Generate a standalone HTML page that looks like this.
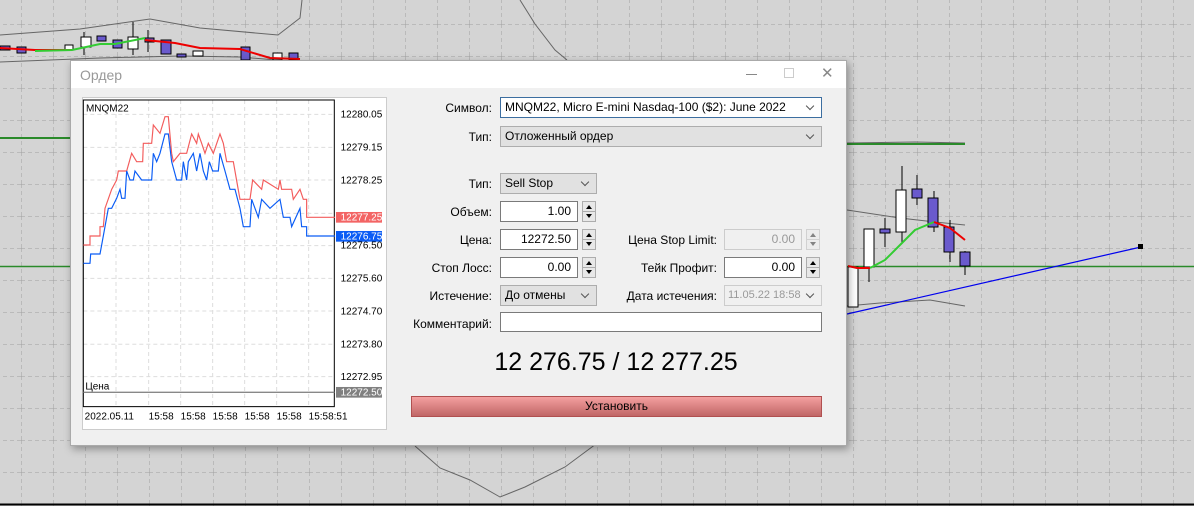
<!DOCTYPE html>
<html><head><meta charset="utf-8"><style>
*{margin:0;padding:0;box-sizing:border-box}
body{width:1194px;height:506px;overflow:hidden;background:#d4d4d4;font-family:"Liberation Sans",Arial,sans-serif;font-size:12px;color:#000;position:relative}
.abs{position:absolute}
#dlg{left:70px;top:60px;width:777px;height:386px;background:#f0f0f0;border:1px solid #aaa;box-shadow:2px 3px 8px rgba(0,0,0,.35)}
#title{left:0;top:0;width:775px;height:27px;background:#fff}
.lbl{position:absolute;text-align:right;width:200px;font-size:12px;line-height:20px}
.inp{position:absolute;background:#fff;border:1px solid #7a7a7a;height:21px;line-height:19px;text-align:right;padding-right:6px;font-size:12px}
.dd{position:absolute;background:#e1e1e1;border:1px solid #adadad;height:21px;line-height:19px;padding-left:4px;font-size:12px}
.dd:after{content:"";position:absolute;right:8px;top:5px;width:5px;height:5px;border-right:1px solid #555;border-bottom:1px solid #555;transform:rotate(45deg)}
.sp{position:absolute;width:14px;height:21px;border:1px solid #adadad;background:#e8e8e8}
.sp:before{content:"";position:absolute;left:3px;top:3px;border-left:3px solid transparent;border-right:3px solid transparent;border-bottom:4px solid #000}
.sp:after{content:"";position:absolute;left:3px;top:12px;border-left:3px solid transparent;border-right:3px solid transparent;border-top:4px solid #000}
.sp i{position:absolute;left:0;top:9px;width:12px;border-top:1px solid #adadad}
.dis{opacity:.45}
</style></head><body>
<svg class="abs" style="left:0;top:0" width="1194" height="506">
<defs><pattern id="g" x="21" y="24" width="32" height="32" patternUnits="userSpaceOnUse"><path d="M0 0V32M0 0H32" stroke="#a0a0a0" stroke-dasharray="4,3" fill="none"/></pattern></defs>
<rect width="1194" height="506" fill="url(#g)"/>
<line x1="0" y1="504.5" x2="1194" y2="504.5" stroke="#000" stroke-width="2"/>
<g fill="none" stroke="#666">
<path d="M0 35 L80 29 L150 19 L200 28 L278 35 L300 18 L302 0"/>
<path d="M0 62 L100 58 L180 56 L240 57 L300 62"/>
<path d="M520 0 L535 24 L555 50 L567 60"/>
<path d="M415 446 L440 468 L470 480 L500 497 L525 487 L565 467 L600 441"/>
<path d="M847 210 L900 218 L935 222 L965 225"/>
<path d="M847 306 L880 303 L930 300 L965 306"/>
<path d="M847 143 L915 142 L965 143"/>
</g>
<line x1="0" y1="138" x2="70" y2="138" stroke="#2a8a2a" stroke-width="2"/>
<line x1="847" y1="144" x2="965" y2="144" stroke="#2a8a2a" stroke-width="2"/>
<line x1="0" y1="266.5" x2="1194" y2="266.5" stroke="#2a8a2a" stroke-width="1.5"/>
<path d="M847 314 L1141 247" stroke="#0000ee" stroke-width="1.2"/>
<rect x="1138" y="244" width="5" height="5" fill="#000"/>
<g stroke="#000" stroke-width="1">
<line x1="84" y1="32" x2="84" y2="55"/><line x1="133" y1="22" x2="133" y2="55"/><line x1="148" y1="30" x2="148" y2="52"/>
<rect x="0" y="46" width="10" height="4" fill="#6a5acd"/><rect x="17" y="47" width="9" height="6" fill="#6a5acd"/>
<rect x="65" y="45" width="8" height="5" fill="#fff"/><rect x="81" y="37" width="10" height="10" fill="#fff"/>
<rect x="97" y="36" width="9" height="5" fill="#6a5acd"/><rect x="113" y="40" width="9" height="8" fill="#6a5acd"/>
<rect x="128" y="37" width="10" height="12" fill="#fff"/><rect x="145" y="38" width="9" height="4" fill="#6a5acd"/>
<rect x="161" y="40" width="10" height="14" fill="#6a5acd"/><rect x="177" y="54" width="9" height="3" fill="#6a5acd"/>
<rect x="193" y="51" width="10" height="5" fill="#fff"/><rect x="241" y="47" width="9" height="13" fill="#6a5acd"/>
<rect x="273" y="53" width="9" height="7" fill="#fff"/><rect x="289" y="53" width="9" height="7" fill="#6a5acd"/>
<line x1="902" y1="166" x2="902" y2="243"/><line x1="917" y1="175" x2="917" y2="205"/><line x1="934" y1="191" x2="934" y2="232"/><line x1="950" y1="220" x2="950" y2="262"/><line x1="965" y1="251" x2="965" y2="275"/><line x1="869" y1="229" x2="869" y2="282"/><line x1="885" y1="218" x2="885" y2="247"/>
<rect x="848" y="267" width="10" height="40" fill="#fff"/>
<rect x="864" y="229" width="10" height="38" fill="#fff"/>
<rect x="880" y="229" width="10" height="4" fill="#6a5acd"/>
<rect x="896" y="190" width="10" height="42" fill="#fff"/>
<rect x="912" y="189" width="10" height="9" fill="#6a5acd"/>
<rect x="928" y="198" width="10" height="29" fill="#6a5acd"/>
<rect x="944" y="227" width="10" height="25" fill="#6a5acd"/>
<rect x="960" y="252" width="10" height="14" fill="#6a5acd"/>
</g>
<path d="M0 48 L35 50 L72 50" stroke="#e00" stroke-width="2" fill="none"/>
<path d="M35 51 L72 50 L100 44 L115 44 L145 38" stroke="#3c3" stroke-width="2" fill="none"/>
<path d="M145 40 L175 43 L200 48 L240 49 L270 58 L300 59" stroke="#e00" stroke-width="2" fill="none"/>
<path d="M848 266 L857 268 L870 268" stroke="#e00" stroke-width="2" fill="none"/>
<path d="M870 268 L885 260 L900 245 L915 230 L934 222" stroke="#3c3" stroke-width="2" fill="none"/>
<path d="M934 222 L950 228 L965 240" stroke="#e00" stroke-width="2" fill="none"/>
</svg>

<div id="dlg" class="abs">
<div id="title" class="abs"><span class="abs" style="left:9px;top:6px;font-size:14px;color:#999">Ордер</span>
<span class="abs" style="left:675px;top:13px;width:11px;border-top:1px solid #888"></span>
<span class="abs" style="left:713px;top:7px;width:10px;height:10px;border:1px solid #ccc"></span>
<span class="abs" style="left:750px;top:3px;font-size:15px;color:#888">✕</span></div>
<div class="abs" style="left:11px;top:36px;width:305px;height:333px;background:#fff;border:1px solid #ccc"></div>
<svg class="abs" style="left:-71px;top:-61px" width="460" height="440">
<g transform="translate(70,90) scale(0.3333)">
<g stroke="#ddd" stroke-width="3" stroke-dasharray="12,9">
<path d="M40 73H795M40 172H795M40 270H795M40 370H795M40 467H795M40 565H795M40 663H795M40 763H795M40 860H795"/>
<path d="M138 30V950M236 30V950M332 30V950M428 30V950M524 30V950M620 30V950M716 30V950"/>
</g>
<rect x="40" y="30" width="753" height="920" fill="none" stroke="#000" stroke-width="3"/>
<line x1="40" y1="907" x2="793" y2="907" stroke="#888" stroke-width="4"/>
<path fill="none" stroke="#f35c5c" stroke-width="3.5" d="M40 465H60V438H90V410H100L105 355L125 298L140 270L145 243H170L185 190L200 215H218L220 160H245L250 105L270 130L285 80H295L305 190L310 215L330 190H350L365 132L380 160L385 132L395 160L405 190L415 160L430 190L450 132L460 160L470 215H490L505 300L510 328H540L548 270L575 298L580 270L625 298L630 270L635 298H665L670 328L690 298L700 328H710V382H795"/>
<path fill="none" stroke="#0a5cf5" stroke-width="3.5" d="M40 520H60L62 492H90L95 465L105 410L115 355H125L140 325L150 298L155 325H165L170 243L180 270H190L195 243L215 270H245L250 190L260 215L270 190L285 132H295L305 215L320 270H335L340 215L350 270L355 215L370 190L380 243L390 190L400 243L410 270L418 215L428 243H445L450 190L465 243L480 298H495L510 355L520 410H540L545 328L565 382L575 328L600 355L630 328L640 382H660L665 410L690 355L695 410H710V438H795"/>
<rect x="798" y="366" width="138" height="32" fill="#f36464"/>
<rect x="798" y="423" width="138" height="32" fill="#0a5cf5"/>
<rect x="798" y="891" width="138" height="32" fill="#808080"/>
<g font-family="Liberation Sans,Arial,sans-serif" font-size="30">
<text x="812" y="83">12280.05</text><text x="812" y="182">12279.15</text><text x="812" y="280">12278.25</text>
<text x="812" y="476">12276.50</text><text x="812" y="575">12275.60</text><text x="812" y="673">12274.70</text>
<text x="812" y="773">12273.80</text><text x="812" y="870">12272.95</text>
<text x="812" y="392" fill="#fff">12277.25</text><text x="812" y="449" fill="#fff">12276.75</text><text x="812" y="917" fill="#fff">12272.50</text>
<text x="48" y="64">MNQM22</text><text x="46" y="898">Цена</text>
<text x="44" y="988">2022.05.11</text><text x="236" y="988">15:58</text><text x="332" y="988">15:58</text><text x="428" y="988">15:58</text><text x="524" y="988">15:58</text><text x="620" y="988">15:58</text><text x="716" y="988">15:58:51</text>
</g></g></svg>

<div class="lbl" style="left:221px;top:37px">Символ:</div>
<div class="dd" style="left:429px;top:36px;width:322px;background:#fff;border-color:#3c6ea0">MNQM22, Micro E-mini Nasdaq-100 ($2): June 2022</div>
<div class="lbl" style="left:221px;top:66px">Тип:</div>
<div class="dd" style="left:429px;top:65px;width:322px">Отложенный ордер</div>
<div class="lbl" style="left:221px;top:113px">Тип:</div>
<div class="dd" style="left:429px;top:112px;width:97px">Sell Stop</div>
<div class="lbl" style="left:221px;top:141px">Объем:</div>
<div class="inp" style="left:429px;top:140px;width:78px">1.00</div><div class="sp" style="left:511px;top:140px"><i></i></div>
<div class="lbl" style="left:221px;top:169px">Цена:</div>
<div class="inp" style="left:429px;top:168px;width:78px">12272.50</div><div class="sp" style="left:511px;top:168px"><i></i></div>
<div class="lbl" style="left:221px;top:197px">Стоп Лосс:</div>
<div class="inp" style="left:429px;top:196px;width:78px">0.00</div><div class="sp" style="left:511px;top:196px"><i></i></div>
<div class="lbl" style="left:221px;top:225px">Истечение:</div>
<div class="dd" style="left:429px;top:224px;width:97px">До отмены</div>
<div class="lbl" style="left:221px;top:253px">Комментарий:</div>
<div class="inp" style="left:429px;top:251px;width:322px;height:20px"></div>
<div class="lbl" style="left:446px;top:169px">Цена Stop Limit:</div>
<div class="inp" style="left:653px;top:168px;width:78px;background:#f0f0f0;border-color:#ccc;color:#999">0.00</div><div class="sp dis" style="left:735px;top:168px"><i></i></div>
<div class="lbl" style="left:446px;top:197px">Тейк Профит:</div>
<div class="inp" style="left:653px;top:196px;width:78px">0.00</div><div class="sp" style="left:735px;top:196px"><i></i></div>
<div class="lbl" style="left:446px;top:225px">Дата истечения:</div>
<div class="dd" style="left:653px;top:224px;width:98px;background:#f0f0f0;border-color:#ccc;color:#999;padding-left:3px;font-size:11px">11.05.22 18:58</div>
<div class="abs" style="left:340px;top:287px;width:410px;text-align:center;font-size:25px">12 276.75 / 12 277.25</div>
<div class="abs" style="left:340px;top:335px;width:411px;height:21px;border:1px solid #b05050;background:linear-gradient(#f4a0a0,#c06666);text-align:center;line-height:19px;font-size:12px">Установить</div>
</div>
</body></html>
